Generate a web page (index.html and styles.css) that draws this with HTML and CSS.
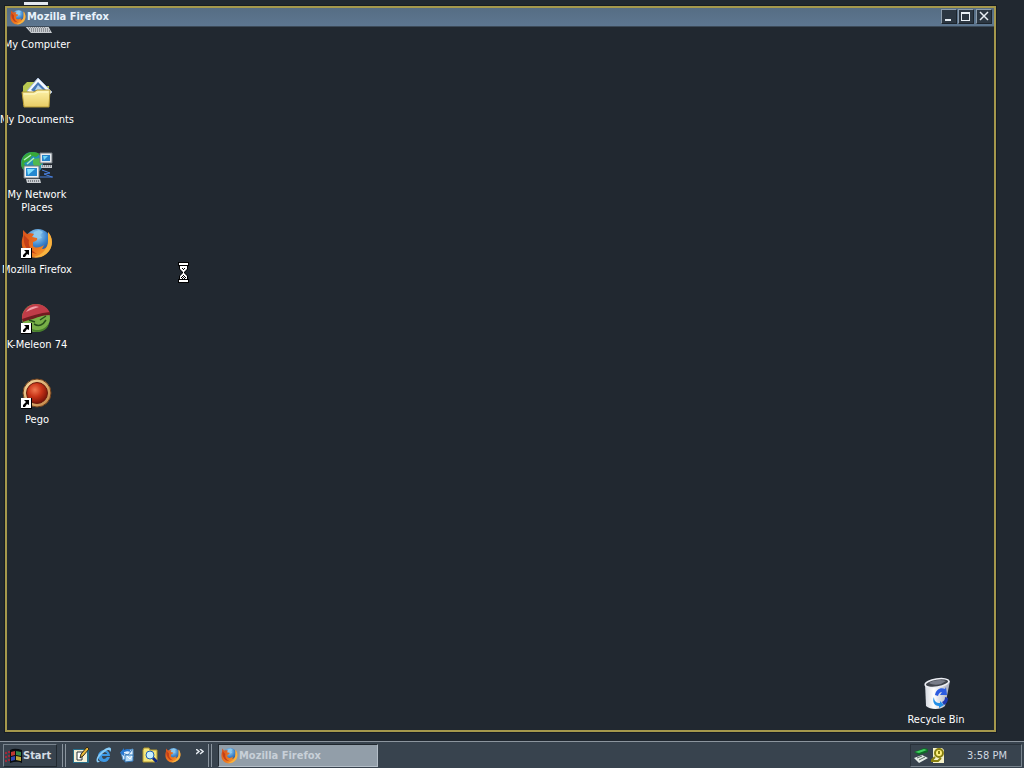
FILE: index.html
```html
<!DOCTYPE html>
<html lang="en">
<head>
    <meta charset="UTF-8">
    <meta name="viewport" content="width=device-width, initial-scale=1.0">
    <title>Desktop</title>
    <link rel="stylesheet" href="styles.css">
</head>
<body>
    <!-- Shared icons -->
    <svg class="sprites" aria-hidden="true">
        <defs>
            <radialGradient id="globe" cx="45%" cy="25%" r="75%">
                <stop offset="0" stop-color="#a8dcf8"/>
                <stop offset="0.5" stop-color="#3f86cc"/>
                <stop offset="1" stop-color="#143a84"/>
            </radialGradient>
            <linearGradient id="fox" x1="0" y1="0" x2="1" y2="1">
                <stop offset="0" stop-color="#d8501c"/>
                <stop offset="0.6" stop-color="#ee7a20"/>
                <stop offset="1" stop-color="#f8b83c"/>
            </linearGradient>
            <radialGradient id="redball" cx="40%" cy="35%" r="65%">
                <stop offset="0" stop-color="#f07850"/>
                <stop offset="0.5" stop-color="#c83418"/>
                <stop offset="1" stop-color="#7c1408"/>
            </radialGradient>
            <linearGradient id="ring" x1="0" y1="0" x2="1" y2="1">
                <stop offset="0" stop-color="#f8dca4"/>
                <stop offset="1" stop-color="#c08040"/>
            </linearGradient>
            <linearGradient id="folder" x1="0" y1="0" x2="0" y2="1">
                <stop offset="0" stop-color="#fdf2a8"/>
                <stop offset="1" stop-color="#e8cc64"/>
            </linearGradient>
            <linearGradient id="bin" x1="0" y1="0" x2="1" y2="0">
                <stop offset="0" stop-color="#d4d8e0"/>
                <stop offset="0.35" stop-color="#ffffff"/>
                <stop offset="1" stop-color="#a4a8b8"/>
            </linearGradient>
        </defs>
        <symbol id="firefox" viewBox="0 0 32 32">
            <circle cx="17" cy="15" r="13" fill="url(#globe)"/>
            <path d="M13 5l5-2 4 2-3 3 2 3-5 1-3-3z" fill="#8cc8ec"/>
            <path d="M27 5c5 5 5 14 1 19-6 8-17 9-23 3-5-5-5-13-3-18l0-6 4 4c2-1 5-1 7 0l-2 3 5 1c1 2-1 3-4 4l0 4c3 3 8 1 11-1l-2 4c3 0 5-2 6-5 1-4 1-8 0-12z" fill="url(#fox)"/>
            <path d="M27 5c5 5 5 14 1 19-4 5-10 7-15 6 8-2 14-8 14-16z" fill="#f9b440"/>
            <path d="M3 8c-1 7 1 13 6 17l7 2C9 23 7 18 8 13z" fill="#c44018"/>
        </symbol>
        <symbol id="shortcut" viewBox="0 0 11 11">
            <path d="M0 0h11v11H0z" fill="#000"/>
            <path d="M0 0h10v10H0z" fill="#fff"/>
            <path d="M3 2h5v5L6 6 4 9H2V7l3-3z" fill="#000"/>
        </symbol>
    </svg>

    <main class="desktop">
        <div class="icon-column">
            <button class="desktop-icon">
                <svg viewBox="0 0 32 32">
                    <path d="M3 0h24v20H3z" fill="#e4e8f0"/>
                    <path d="M6 4h18v13H6z" fill="#3c8cd0"/>
                    <path d="M2 22h24l5 9H10z" fill="#c8ccd0"/>
                    <path d="M7 25h18M8 27h20M10 29h19" stroke="#50545c" stroke-dasharray="1 1"/>
                </svg>
                <span>My Computer</span>
            </button>
            <button class="desktop-icon">
                <svg viewBox="0 0 32 32">
                    <path d="M2 9l4-4h8l3 4h11v19H2z" fill="#b8c850"/>
                    <path d="M6 14L17 1l14 14-9 9z" fill="#f4f8ff" stroke="#a8bcd8"/>
                    <path d="M10 13l7-8 9 9-6 5z" fill="#4878b8"/>
                    <path d="M14 13l3-5 6 6z" fill="#b4d4f0"/>
                    <path d="M1 15h12l3-2h13l-1 17H3z" fill="url(#folder)" stroke="#b49834"/>
                    <path d="M3 17h11l3-2h10" stroke="#fffbd0" fill="none"/>
                </svg>
                <span>My Documents</span>
            </button>
            <button class="desktop-icon">
                <svg viewBox="0 0 32 32">
                    <circle cx="11" cy="11" r="11" fill="#2490b8"/>
                    <path d="M2 5c4-6 12-6 17-3l-4 3-4-1-3 5-5 2 3 6-3 1C-1 15 0 10 2 5z" fill="#38a838"/>
                    <path d="M12 7l7-1 2 6-6 4-3-4z" fill="#50b850"/>
                    <path d="M3 8l7-5M6 12l7-6" stroke="#b0f0c0" stroke-width="1.500"/>
                    <path d="M19 1h12v10H19z" fill="#e4e8ec" stroke="#70767c"/>
                    <path d="M21 3h8v6h-8z" fill="#2480c8"/>
                    <path d="M22 4h5l-4 4z" fill="#70d8f8"/>
                    <path d="M20 13h11v3H20z" fill="#c4c8cc"/>
                    <path d="M21 14h9" stroke="#50545c" stroke-dasharray="1 1"/>
                    <path d="M3 14h15v12H3z" fill="#f0f2f4" stroke="#70767c"/>
                    <path d="M5 16h11v8H5z" fill="#2488d0"/>
                    <path d="M6 17h8l-7 6z" fill="#80e0ff"/>
                    <path d="M5 27h14l1 4H6z" fill="#c8ccd0"/>
                    <path d="M7 29h12" stroke="#30343c" stroke-dasharray="1 1"/>
                    <path d="M19 25h13M21 18l8 3-6 1 8 3" stroke="#4880e0" fill="none"/>
                </svg>
                <span>My Network Places</span>
            </button>
            <button class="desktop-icon">
                <svg viewBox="0 0 32 32">
                    <use href="#firefox"/>
                    <use href="#shortcut" x="0" y="21" width="11" height="11"/>
                </svg>
                <span>Mozilla Firefox</span>
            </button>
            <button class="desktop-icon">
                <svg viewBox="0 0 32 32">
                    <circle cx="15" cy="16" r="14" fill="#78b048"/>
                    <path d="M1 18C0 9 7 2 15 2c7 0 12 4 14 9-8 1-19 3-28 7z" fill="#c03c48"/>
                    <path d="M5 10c3-5 9-7 13-5-4 1-9 3-13 5z" fill="#f0a0a8"/>
                    <path d="M1 17c9-3 18-6 28-7v3c-8 0-14 3-17 4-4 1-8 2-10 3z" fill="#701c20"/>
                    <path d="M8 18l6 2M19 18l6-4M13 22c5 3 9 1 12-4" stroke="#28501c" stroke-width="1.500" fill="none"/>
                    <path d="M9 26c7 4 15 2 19-5-1 6-6 9-12 9-3 0-6-2-7-4z" fill="#48802c"/>
                    <use href="#shortcut" x="0" y="21" width="11" height="11"/>
                </svg>
                <span>K-Meleon 74</span>
            </button>
            <button class="desktop-icon">
                <svg viewBox="0 0 32 32">
                    <circle cx="16" cy="16" r="14" fill="url(#ring)" stroke="#70401c"/>
                    <circle cx="16" cy="16" r="10.500" fill="url(#redball)" stroke="#6c1c0c"/>
                    <use href="#shortcut" x="0" y="21" width="11" height="11"/>
                </svg>
                <span>Pego</span>
            </button>
        </div>

        <button class="desktop-icon recycle-bin">
            <svg viewBox="0 0 32 32">
                <path d="M5 6l1 23c4 4 15 4 19 0l5-25z" fill="url(#bin)"/>
                <ellipse cx="17" cy="6" rx="12" ry="4" transform="rotate(-9 17 6)" fill="#40444c" stroke="#eceef4" stroke-width="1.500"/>
                <path d="M9 6c4-3 12-4 17-2l-5 3c-4 1-9 1-12-1z" fill="#787c88"/>
                <path d="M15 18c1-6 6-8 10-6l1-2 1 8h-7l2-3c-2 0-3 1-4 4z" fill="#2c5ce0"/>
                <path d="M14 20c0 4 2 6 6 6v-2l4 4-5 3v-2c-5 0-7-5-5-9z" fill="#2490e8"/>
                <path d="M25 20l3 1c0 4-2 6-4 7l-2-3c2-1 3-2 3-5z" fill="#2038b0"/>
            </svg>
            <span>Recycle Bin</span>
        </button>

        <section class="window">
            <header class="title-bar">
                <svg class="title-icon"><use href="#firefox"/></svg>
                <h1>Mozilla Firefox</h1>
                <button class="window-btn" aria-label="Minimize">
                    <svg viewBox="0 0 14 13"><path d="M3 9h6v2H3z"/></svg>
                </button>
                <button class="window-btn" aria-label="Maximize">
                    <svg viewBox="0 0 14 13"><path d="M2 2h9v9H2zM3 4v6h7V4z" fill-rule="evenodd"/></svg>
                </button>
                <button class="window-btn close-btn" aria-label="Close">
                    <svg viewBox="0 0 14 13"><path d="M3 2l8 8M11 2l-8 8" fill="none" stroke="#e8eef4" stroke-width="1.500"/></svg>
                </button>
            </header>
        </section>

        <!-- Busy cursor -->
        <svg class="hourglass" viewBox="0 0 11 21">
            <path d="M0 0h11v4h-1v3L7 10v1l3 3v3h1v4H0v-4h1v-3l3-3v-1L1 7V4H0z" fill="#000"/>
            <path d="M1 1h9v2H1zM1 18h9v2H1zM2 4h7v3L6 10v1l3 3v3H2v-3l3-3v-1L2 7z" fill="#fff"/>
            <path d="M4 6h1v1H4zM6 6h1v1H6zM5 7h1v1H5zM5 13h1v1H5zM4 14h1v1H4zM6 14h1v1H6zM3 15h1v1H3zM5 15h1v1H5zM7 15h1v1H7zM4 16h1v1H4zM6 16h1v1H6z" fill="#000"/>
        </svg>
    </main>

    <footer class="taskbar">
        <button class="start-btn">
            <svg viewBox="0 0 17 16">
                <path d="M0 4h2v2H0zM0 8h2v2H0zM0 12h2v2H0zM3 3h2v2H3zM3 7h2v2H3zM3 11h2v2H3z" fill="#a02838"/>
                <path d="M5 2c4-2 8-1 12 0v13c-4-2-8-1-12 0z" fill="#080c10"/>
                <path d="M6 4l4-1v4L6 8z" fill="#c03830"/>
                <path d="M11 3l5 1v4l-5-1z" fill="#388848"/>
                <path d="M6 9l4-1v4l-4 1z" fill="#3048b0"/>
                <path d="M11 8l5 1v4l-5-1z" fill="#c0a838"/>
            </svg>
            Start
        </button>

        <nav class="quick-launch">
            <button aria-label="Show Desktop">
                <svg viewBox="0 0 16 16">
                    <path d="M0 2h16v14H0z" fill="#28708c"/>
                    <path d="M1 3h13v12H1z" fill="#f4f0d8"/>
                    <path d="M4 5h7l-2 3v5H4z" fill="#fff" stroke="#28343c"/>
                    <path d="M7 11l1-4 6-7 2 2-6 7z" fill="#e8b838" stroke="#302818"/>
                </svg>
            </button>
            <button aria-label="Internet Explorer">
                <svg viewBox="0 0 16 16">
                    <path d="M14 10c-1 3-3 5-6 5-4 0-6-3-6-6s3-6 6-6 6 2 6 6H6c0 2 1 3 2 3s2-1 3-2zM6 7h5c0-1-1-2-3-2S6 6 6 7z" fill="#3c98e4"/>
                    <path d="M1 15c-2-3 2-9 8-13 3-2 6-2 6 0 0 1 0 2-1 3 0-2-1-3-4-1-5 3-8 7-8 9 0 1 1 1 2 1-1 1-2 2-3 1z" fill="#88ccf8"/>
                </svg>
            </button>
            <button aria-label="Outlook Express">
                <svg viewBox="0 0 16 16">
                    <path d="M2 5l12-3v8l-10 3z" fill="#e0f0ff" stroke="#5090c8"/>
                    <path d="M3 6l6 2 4-5" fill="none" stroke="#4880b8"/>
                    <path d="M1 6l4-5v2c4-2 6-1 7 2-3-1-5-1-7 0v4z" fill="#2878d0"/>
                    <path d="M6 8h8v6l-8 1z" fill="#b8dcf8" stroke="#3478b8"/>
                    <path d="M8 9l3 3 2-3" fill="none" stroke="#fff"/>
                </svg>
            </button>
            <button aria-label="Search">
                <svg viewBox="0 0 16 16">
                    <path d="M1 3l1-2h5l1 2h7v12H1z" fill="#f4e478" stroke="#b09830"/>
                    <path d="M10 10l5 5" stroke="#102880" stroke-width="3"/>
                    <circle cx="8" cy="8" r="4" fill="#c8f0ff" stroke="#2060b0"/>
                </svg>
            </button>
            <button aria-label="Mozilla Firefox">
                <svg><use href="#firefox"/></svg>
            </button>
            <button class="more-btn" aria-label="More">
                <svg viewBox="0 0 8 6"><path d="M0 0l3 2.500L0 5M4 0l3 2.500L4 5" fill="none" stroke="#e4eaf0" stroke-width="1.500"/></svg>
            </button>
        </nav>

        <div class="tasks">
            <button class="task">
                <svg><use href="#firefox"/></svg>
                Mozilla Firefox
            </button>
        </div>

        <div class="tray">
            <svg viewBox="0 0 16 16">
                <path d="M1 4l10-4 4 1v3L6 7z" fill="#106828"/>
                <path d="M2 4l9-3 3 1-8 3z" fill="#40d060"/>
                <path d="M1 10l8-3 6 3-9 5z" fill="#e4ece8"/>
                <path d="M4 10l5-2M6 12l6-3" stroke="#586860"/>
            </svg>
            <svg viewBox="0 0 16 16">
                <path d="M2 0h9l2 2v13H2z" fill="#f4f0c8"/>
                <circle cx="8" cy="5" r="4" fill="#fff080" stroke="#888010" stroke-width="2"/>
                <path d="M8 3v3M4 9l-4 4h7l3-3" stroke="#888010" stroke-width="2" fill="none"/>
            </svg>
            <time>3:58 PM</time>
        </div>
    </footer>
</body>
</html>
```

FILE: styles.css
```css
* {
    box-sizing: border-box;
}

body {
    margin: 0;
    height: 100vh;
    display: flex;
    flex-direction: column;
    overflow: hidden;
    background: #212830;
    color: #fff;
    font-family: "DejaVu Sans Condensed", "DejaVu Sans", sans-serif;
    font-size: 11px;
    line-height: 13px;
}

button {
    margin: 0;
    padding: 0;
    border: 0;
    background: none;
    color: inherit;
    font: inherit;
}

svg {
    display: block;
    flex: none;
}

.sprites {
    position: absolute;
    width: 0;
    height: 0;
}

/* Desktop */
.desktop {
    flex: 1;
    position: relative;
    min-height: 0;
}

.icon-column {
    display: flex;
    flex-direction: column;
    width: 74px;
    padding-top: 2px;
}

.desktop-icon {
    display: flex;
    flex-direction: column;
    align-items: center;
    gap: 4px;
    width: 74px;
    height: 75px;
}

.desktop-icon svg {
    width: 32px;
    height: 32px;
}

.desktop-icon span {
    white-space: nowrap;
}

.desktop-icon:nth-child(3) span {
    white-space: normal;
}

.recycle-bin {
    position: absolute;
    right: 51px;
    bottom: -11px;
}

.hourglass {
    position: absolute;
    left: 178px;
    top: 262px;
    width: 11px;
    height: 21px;
}

/* Window, its client area has not been painted yet */
.window {
    position: absolute;
    top: 6px;
    right: 28px;
    bottom: 9px;
    left: 5px;
    border: 2px solid #a5984c;
    outline: 1px solid #171c24;
}

.title-bar {
    display: flex;
    align-items: center;
    height: 19px;
    padding: 0 2px 1px 3px;
    background: linear-gradient(#566d84, #5d7690);
    border-bottom: 1px solid #3c4a58;
}

.title-icon {
    width: 16px;
    height: 16px;
}

.title-bar h1 {
    flex: 1;
    margin: 0 0 0 1px;
    font-size: 11px;
    font-weight: bold;
    color: #e8f2fc;
}

.window-btn {
    width: 16px;
    height: 15px;
    margin-left: 1px;
    background: #2c3742;
    border: 1px solid #1c242c;
    border-top-color: #8c9cac;
    border-left-color: #8c9cac;
}

.window-btn svg {
    width: 14px;
    height: 13px;
    fill: #e8eef4;
}

.close-btn {
    margin-left: 2px;
}

/* Taskbar */
.taskbar {
    display: flex;
    height: 27px;
    padding: 2px 2px 1px 3px;
    background: #38434e;
    border-top: 1px solid #8c959e;
}

.start-btn {
    display: flex;
    align-items: center;
    gap: 1px;
    width: 54px;
    padding-left: 1px;
    border: 1px solid #20282f;
    border-top-color: #78838d;
    border-left-color: #78838d;
    font-weight: bold;
    color: #d4dce4;
}

.start-btn svg {
    width: 17px;
    height: 16px;
}

.quick-launch {
    display: flex;
    align-items: center;
    gap: 7px;
    margin-left: 5px;
    padding: 0 0 2px 7px;
    border-left: 4px double #8a949e;
}

.quick-launch svg {
    width: 16px;
    height: 16px;
}

.more-btn {
    align-self: flex-start;
    margin: 5px 0 0 8px;
}

.quick-launch .more-btn svg {
    width: 8px;
    height: 6px;
}

.tasks {
    flex: 1;
    margin-left: 4px;
    padding-left: 6px;
    border-left: 4px double #8a949e;
}

.task {
    display: flex;
    align-items: center;
    gap: 1px;
    width: 160px;
    height: 23px;
    padding-left: 2px;
    background: #929ea9;
    border: 1px solid #20282f;
    border-right-color: #b4bec8;
    border-bottom-color: #b4bec8;
    font-weight: bold;
    color: #c8d0d8;
}

.task svg {
    width: 17px;
    height: 17px;
}

.tray {
    display: flex;
    align-items: center;
    gap: 2px;
    width: 112px;
    padding-left: 2px;
    border: 1px solid #78838d;
    border-top-color: #28313a;
    border-left-color: #28313a;
}

.tray svg {
    width: 16px;
    height: 16px;
}

.tray time {
    margin: 0 auto;
    padding-left: 4px;
    color: #d0d8e0;
}
```
